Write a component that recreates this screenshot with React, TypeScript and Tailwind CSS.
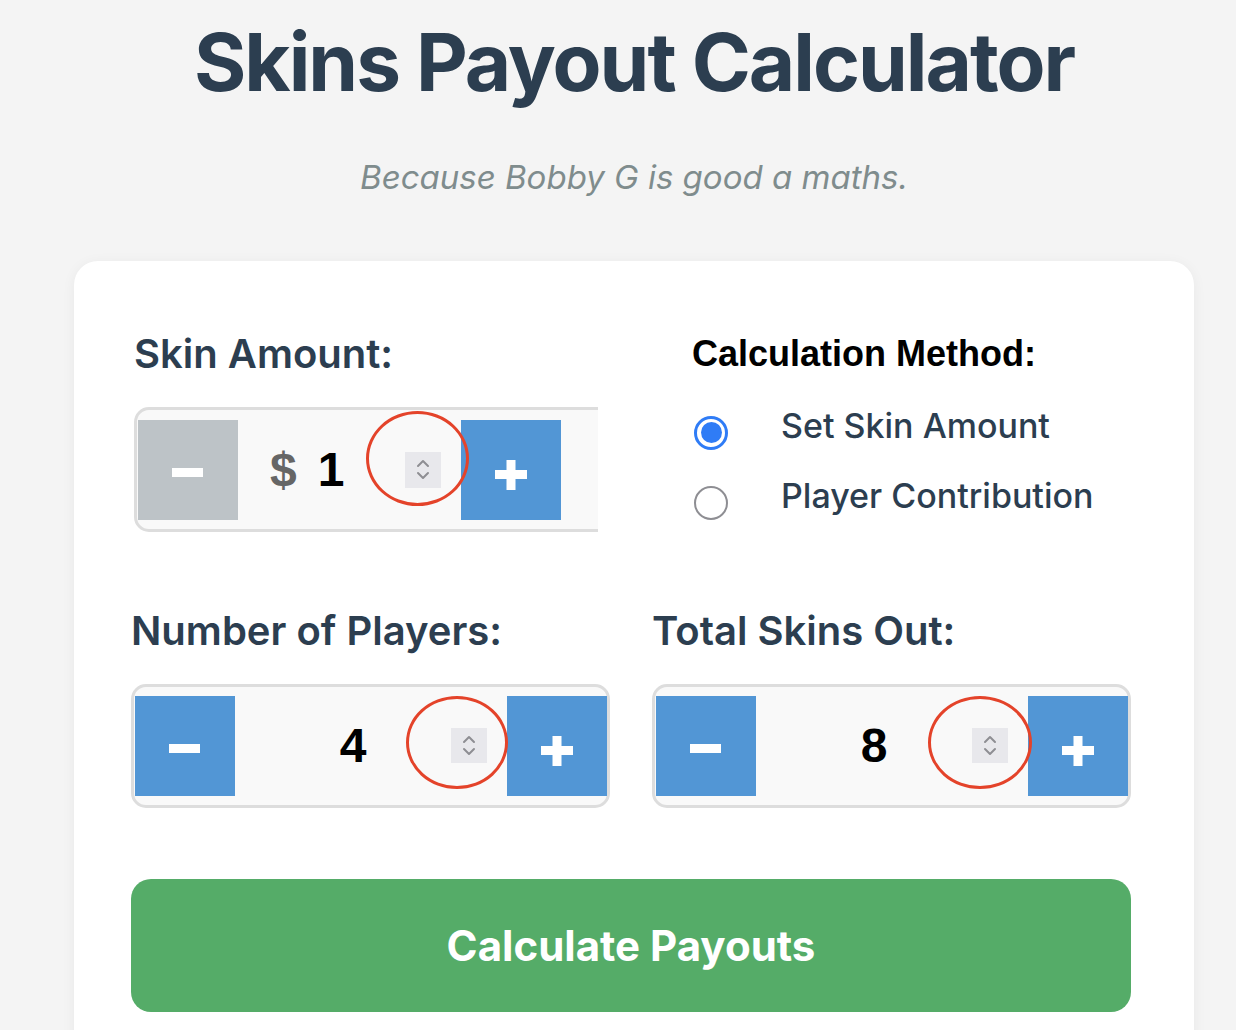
import React, { useState } from 'react';

const blue = 'bg-[#5296d5]';

function MinusIcon() {
  return (
    <svg width="100" height="100" viewBox="0 0 100 100">
      <rect x="34" y="48" width="31" height="9" fill="white" />
    </svg>
  );
}

function PlusIcon() {
  return (
    <svg width="100" height="100" viewBox="0 0 100 100">
      <rect x="34" y="50" width="32" height="9" fill="white" />
      <rect x="45.5" y="40" width="9" height="30" fill="white" />
    </svg>
  );
}

function Spinner({ ring, tall }: { ring: string; tall?: boolean }) {
  return (
    <div className={`relative w-[36px] shrink-0 bg-[#e8e8ec] ${tall ? 'h-[36px]' : 'h-[35px]'}`}>
      <svg width="36" height="35" viewBox="0 0 36 35" fill="none" stroke="#8e8e93" strokeWidth="2" strokeLinecap="round" strokeLinejoin="round">
        <path d="M13 14 L18 9 L23 14" />
        <path d="M13 21 L18 26 L23 21" />
      </svg>
      {/* red annotation ring from the screenshot */}
      <div className={`absolute rounded-[50%] border-[3.5px] border-[#e4432a] ${ring}`} />
    </div>
  );
}

function Radio({ checked, label, onClick }: { checked: boolean; label: string; onClick: () => void }) {
  return (
    <div onClick={onClick} className="flex items-start h-[70px] cursor-pointer">
      {checked ? (
        <div className="mt-[16px] ml-[2px] w-[34px] h-[34px] rounded-full border-[3px] border-[#2f7cf6] bg-white flex items-center justify-center shrink-0">
          <div className="w-[21px] h-[21px] rounded-full bg-[#2f7cf6]" />
        </div>
      ) : (
        <div className="mt-[16px] ml-[2px] w-[34px] h-[34px] rounded-full border-2 border-[#8e8e93] bg-white shrink-0" />
      )}
      <span className="ml-[53px] text-[34px] font-medium text-[#2c3e50]">{label}</span>
    </div>
  );
}

export default function App() {
  const [method, setMethod] = useState('set');
  const [skin, setSkin] = useState(1);
  const [players, setPlayers] = useState(4);
  const [skinsOut, setSkinsOut] = useState(8);

  return (
    <div className="min-h-screen bg-[#f4f4f4] font-['Inter','Liberation_Sans',sans-serif] pb-10">
      <div className="ml-[32px]">
        <h1 className="pt-[22px] text-center text-[80px] leading-none font-bold tracking-[-0.025em] text-[#2c3e50]">
          Skins Payout Calculator
        </h1>
        <p className="mt-[51px] text-center text-[33px] italic text-[#7f8c8d]">
          Because Bobby G is good a maths.
        </p>
      </div>

      <div className="mt-[58px] mx-[74px] w-[1120px] bg-white rounded-[24px] shadow-[0_2px_14px_rgba(0,0,0,0.05)] pt-[63px] pl-[57px] pr-[63px] pb-[80px]">
        {/* row 1 */}
        <div className="flex">
          <div className="ml-[3px] w-[464px] overflow-hidden">
            <div className="text-[40px] font-semibold text-[#2c3e50]">Skin Amount:</div>
            <div className="mt-[23px] w-[520px] flex border-[3px] border-[#dddddd] rounded-[15px] bg-[#f9f9f9] pt-[10px] pb-[9px]">
              <button onClick={() => setSkin(Math.max(1, skin - 1))} className="w-[100px] h-[100px] ml-[1px] bg-[#bdc3c7] shrink-0">
                <MinusIcon />
              </button>
              <div className="w-[167px] flex items-center pl-[32px] font-['Liberation_Sans',sans-serif] font-bold text-[48px]">
                <span className="text-[#666666]">$</span>
                <span className="ml-[21px] text-black">{skin}</span>
              </div>
              <div className="flex items-center">
                <Spinner tall ring="left-[-39px] top-[-41px] w-[103px] h-[95px]" />
              </div>
              <button onClick={() => setSkin(skin + 1)} className={`ml-[20px] w-[100px] h-[100px] ${blue} shrink-0`}>
                <PlusIcon />
              </button>
            </div>
          </div>

          <div className="ml-[94px] pt-[3px]">
            <div className="font-['Liberation_Sans',sans-serif] font-bold text-[36px] text-black">Calculation Method:</div>
            <div className="mt-[19px]">
              <Radio checked={method === 'set'} label="Set Skin Amount" onClick={() => setMethod('set')} />
              <Radio checked={method === 'player'} label="Player Contribution" onClick={() => setMethod('player')} />
            </div>
          </div>
        </div>

        {/* row 2 */}
        <div className="mt-[61px] grid grid-cols-2 gap-[42px]">
          <div>
            <div className="text-[40px] font-semibold text-[#2c3e50]">Number of Players:</div>
            <div className="mt-[23px] flex border-[3px] border-[#dddddd] rounded-[15px] bg-[#f9f9f9] py-[9px]">
              <button onClick={() => setPlayers(Math.max(1, players - 1))} className={`w-[100px] h-[100px] ml-[1px] ${blue} shrink-0`}>
                <MinusIcon />
              </button>
              <div className="flex-1 flex items-center pl-[20px]">
                <span className="flex-1 text-center font-['Liberation_Sans',sans-serif] font-bold text-[48px] text-black">{players}</span>
                <Spinner ring="left-[-45px] top-[-32px] w-[102px] h-[93px]" />
              </div>
              <button onClick={() => setPlayers(players + 1)} className={`ml-[20px] w-[100px] h-[100px] ${blue} shrink-0`}>
                <PlusIcon />
              </button>
            </div>
          </div>
          <div>
            <div className="text-[40px] font-semibold text-[#2c3e50]">Total Skins Out:</div>
            <div className="mt-[23px] flex border-[3px] border-[#dddddd] rounded-[15px] bg-[#f9f9f9] py-[9px]">
              <button onClick={() => setSkinsOut(Math.max(1, skinsOut - 1))} className={`w-[100px] h-[100px] ml-[1px] ${blue} shrink-0`}>
                <MinusIcon />
              </button>
              <div className="flex-1 flex items-center pl-[20px]">
                <span className="flex-1 text-center font-['Liberation_Sans',sans-serif] font-bold text-[48px] text-black">{skinsOut}</span>
                <Spinner ring="left-[-44px] top-[-32px] w-[104px] h-[93px]" />
              </div>
              <button onClick={() => setSkinsOut(skinsOut + 1)} className={`ml-[20px] w-[100px] h-[100px] ${blue} shrink-0`}>
                <PlusIcon />
              </button>
            </div>
          </div>
        </div>

        <button className="mt-[71px] w-full h-[133px] rounded-[20px] bg-[#55ac68] text-white text-[42px] font-bold">
          Calculate Payouts
        </button>
      </div>
    </div>
  );
}
